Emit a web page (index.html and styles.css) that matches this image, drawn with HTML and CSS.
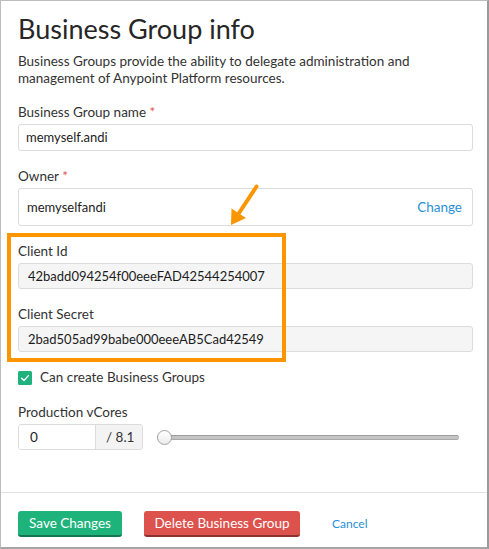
FILE: index.html
```html
<!DOCTYPE html>
<html lang="en">
<head>
<meta charset="utf-8">
<title>Business Group info</title>
<link rel="stylesheet" href="styles.css">
</head>
<body>
<div class="frame">
  <main class="content">
    <h1 class="title">Business Group info</h1>
    <p class="lead">Business Groups provide the ability to delegate administration and management of Anypoint Platform resources.</p>

    <div class="field">
      <label class="label">Business Group name <span class="req">*</span></label>
      <div class="input">memyself.andi</div>
    </div>

    <div class="field">
      <label class="label">Owner <span class="req">*</span></label>
      <div class="owner">
        <span class="owner-name">memyselfandi</span>
        <a class="link change">Change</a>
      </div>
    </div>

    <div class="field">
      <label class="label">Client Id</label>
      <div class="input input-readonly">42badd094254f00eeeFAD42544254007</div>
    </div>

    <div class="field">
      <label class="label">Client Secret</label>
      <div class="input input-readonly">2bad505ad99babe000eeeAB5Cad42549</div>
    </div>

    <div class="field check-row">
      <svg class="checkbox" width="14" height="14" viewBox="0 0 14 14">
        <rect x="0" y="0" width="14" height="14" rx="1.5" fill="#1fb27a"/>
        <polyline points="3.6,7.2 6,9.5 10.4,4.6" fill="none" stroke="#fff" stroke-width="1.4" stroke-linecap="round" stroke-linejoin="round"/>
      </svg>
      <span class="check-label">Can create Business Groups</span>
    </div>

    <div class="field">
      <label class="label">Production vCores</label>
      <div class="cores-row">
        <div class="input-group">
          <div class="group-input">0</div>
          <div class="group-addon">/ 8.1</div>
        </div>
        <div class="slider">
          <div class="slider-track"></div>
          <div class="slider-thumb"></div>
        </div>
      </div>
    </div>
  </main>

  <footer class="footer">
    <button class="btn btn-save">Save Changes</button>
    <button class="btn btn-delete">Delete Business Group</button>
    <a class="link cancel">Cancel</a>
  </footer>

  <div class="highlight"></div>
  <svg class="arrow" width="40" height="50" viewBox="225 180 40 50">
    <line x1="256.5" y1="186.5" x2="239" y2="213" stroke="#fb9600" stroke-width="4" stroke-linecap="round"/>
    <polygon points="231,225 231.5,208.5 246,218" fill="#fb9600"/>
  </svg>
</div>
</body>
</html>
```

FILE: styles.css
```css
* {
  box-sizing: border-box;
}

html, body {
  margin: 0;
  padding: 0;
  background: #ffffff;
}

body {
  font-family: "Lato", "Open Sans", "Liberation Sans", sans-serif;
  font-size: 13.5px;
  color: #333333;
}

.frame {
  position: relative;
  width: 489px;
  height: 549px;
  border: 1px solid #bdbdbd;
  border-right: 2px solid #9a9a9a;
  border-bottom: 2px solid #a6a6a6;
  display: flex;
  flex-direction: column;
  overflow: hidden;
}

.content {
  flex: 1;
  padding: 11px 14px 0 17px;
}

.title {
  margin: 0;
  font-size: 27px;
  line-height: 34px;
  font-weight: 400;
  color: #262626;
}

.lead {
  margin: 7px 0 0;
  font-size: 13.5px;
  line-height: 17px;
  color: #333333;
}

.field {
  margin-top: 15px;
}

.label {
  display: block;
  line-height: 20px;
  margin-bottom: 2px;
  color: #333333;
}

.req {
  color: #e0524e;
}

.input {
  height: 27px;
  border: 1px solid #dcdcdc;
  border-radius: 3px;
  padding: 0 7px;
  font-size: 13px;
  line-height: 25px;
  color: #1c1c1c;
  background: #ffffff;
}

.input-readonly {
  height: 26px;
  line-height: 24px;
  background: #f5f5f5;
  padding: 0 9px;
}

.owner {
  height: 38px;
  border: 1px solid #dcdcdc;
  border-radius: 3px;
  padding: 0 10px 0 8px;
  display: flex;
  align-items: center;
  justify-content: space-between;
  color: #1c1c1c;
}

.owner-name {
  font-size: 13px;
}

.link {
  color: #2a90d6;
  cursor: pointer;
}

.change {
  font-size: 13.5px;
}

.check-row {
  display: flex;
  align-items: center;
  gap: 8px;
  line-height: 20px;
}

.checkbox {
  display: block;
  margin-top: 2px;
}

.check-label {
  color: #333333;
}

.cores-row {
  display: flex;
  align-items: center;
}

.input-group {
  display: flex;
  width: 125px;
  height: 26px;
  border: 1px solid #dcdcdc;
  border-radius: 3px;
  overflow: hidden;
}

.group-input {
  width: 77px;
  padding-left: 11px;
  line-height: 24px;
  color: #1c1c1c;
  background: #ffffff;
  border-right: 1px solid #dcdcdc;
}

.group-addon {
  flex: 1;
  line-height: 24px;
  padding-left: 10px;
  background: #f3f3f3;
  color: #333333;
}

.slider {
  position: relative;
  flex: 1;
  height: 26px;
  margin: 0 14px 0 14px;
  display: flex;
  align-items: center;
}

.slider-track {
  flex: 1;
  height: 5px;
  border-radius: 3px;
  background: #c4c4c4;
  border-top: 1px solid #9c9c9c;
  border-bottom: 1px solid #a8a8a8;
}

.slider-thumb {
  position: absolute;
  left: 0;
  top: 6px;
  width: 15px;
  height: 15px;
  border-radius: 50%;
  background: linear-gradient(#ffffff, #ececec);
  border: 1px solid #a3a3a3;
}

.footer {
  height: 55px;
  border-top: 1px solid #e2e2e2;
  padding: 18px 0 0 17px;
  display: flex;
  align-items: flex-start;
  gap: 22px;
}

.btn {
  height: 26px;
  border: none;
  border-radius: 3px;
  font-family: "Lato", "Open Sans", "Liberation Sans", sans-serif;
  font-size: 13.5px;
  line-height: 24px;
  color: #ffffff;
  padding: 0;
  text-align: center;
  white-space: nowrap;
  cursor: pointer;
}

.btn-save {
  width: 104px;
  background: #1eb37b;
  border-bottom: 2px solid #14764f;
}

.btn-delete {
  width: 156px;
  background: #dd524d;
  border-bottom: 2px solid #8e3230;
}

.cancel {
  margin-left: 10px;
  font-size: 12px;
  line-height: 26px;
}

.highlight {
  position: absolute;
  left: 6px;
  top: 232px;
  width: 279px;
  height: 129px;
  border: 4px solid #fb9600;
}

.arrow {
  position: absolute;
  left: 224px;
  top: 179px;
}
```
